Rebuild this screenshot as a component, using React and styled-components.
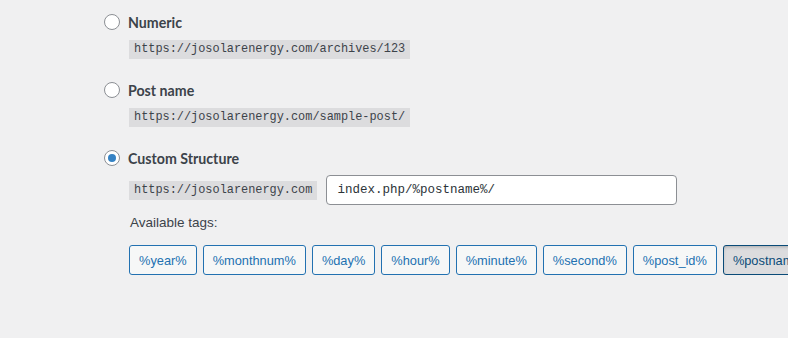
import React from 'react';
import styled, { createGlobalStyle } from "styled-components";

const Global = createGlobalStyle`
  body {
    margin: 0;
    background: #f0f0f1;
    font-family: "Liberation Sans", Arial, sans-serif;
    color: #1d2327;
  }
`;

const Page = styled.div`
  width: 788px;
  height: 338px;
  overflow: hidden;
  padding: 12px 0 0 104px;
  box-sizing: border-box;
`;

const Option = styled.div`
  display: flex;
  flex-direction: column;
  margin-bottom: 21px;
`;

const RadioRow = styled.label`
  display: flex;
  align-items: center;
  gap: 8px;
  height: 20px;
  font-family: Lato, "Liberation Sans", sans-serif;
  font-size: 14.2px;
  font-weight: 700;
  color: #3c434a;
`;

const Radio = styled.span`
  width: 16px;
  height: 16px;
  box-sizing: border-box;
  border-radius: 50%;
  border: 1px solid #8c8f94;
  background: #fff;
  display: flex;
  align-items: center;
  justify-content: center;
  &::after {
    content: "";
    display: ${p => (p.checked ? "block" : "none")};
    width: 8px;
    height: 8px;
    border-radius: 50%;
    background: #3582c4;
  }
`;

const Indent = styled.div`
  display: flex;
  flex-direction: column;
  align-items: flex-start;
  padding-left: 25px;
  margin-top: ${p => p.top || 8}px;
`;

const Code = styled.code`
  display: block;
  font-family: "Liberation Mono", monospace;
  font-size: 11.9px;
  line-height: 19px;
  padding: 0 5px;
  background: #dcdcde;
  color: #3c434a;
`;

const CustomRow = styled.div`
  display: flex;
  align-items: center;
  gap: 9px;
`;

const Input = styled.div`
  width: 351px;
  height: 30px;
  box-sizing: border-box;
  background: #fff;
  border: 1px solid #8c8f94;
  border-radius: 4px;
  padding: 0 10px;
  display: flex;
  align-items: center;
  font-family: "Liberation Mono", monospace;
  font-size: 12.5px;
  color: #2c3338;
`;

const TagsLabel = styled.p`
  margin: 8px 0 0 1px;
  font-size: 13.5px;
  line-height: 20px;
  color: #3c434a;
`;

const Tags = styled.div`
  display: flex;
  gap: 6px;
  margin-top: 12px;
  white-space: nowrap;
`;

const Tag = styled.button`
  flex: none;
  height: 30px;
  padding: 0 9px;
  border: 1px solid ${p => (p.active ? "#0a4b78" : "#2271b1")};
  border-radius: 3px;
  background: ${p => (p.active ? "#dcdcde" : "#f6f7f7")};
  color: ${p => (p.active ? "#0a4b78" : "#2271b1")};
  font-family: "Liberation Sans", Arial, sans-serif;
  font-size: 12.8px;
  box-shadow: ${p => (p.active ? "inset 0 2px 5px -3px rgba(0,0,0,0.5)" : "none")};
`;

const tags = ["%year%", "%monthnum%", "%day%", "%hour%", "%minute%", "%second%", "%post_id%", "%postname%", "%category%"];

export default function App() {
  return (
    <Page>
      <Global />
      <Option>
        <RadioRow><Radio />Numeric</RadioRow>
        <Indent><Code>https://josolarenergy.com/archives/123</Code></Indent>
      </Option>
      <Option>
        <RadioRow><Radio />Post name</RadioRow>
        <Indent><Code>https://josolarenergy.com/sample-post/</Code></Indent>
      </Option>
      <Option>
        <RadioRow><Radio checked />Custom Structure</RadioRow>
        <Indent top={7}>
          <CustomRow>
            <Code>https://josolarenergy.com</Code>
            <Input>index.php/%postname%/</Input>
          </CustomRow>
          <TagsLabel>Available tags:</TagsLabel>
          <Tags>
            {tags.map(t => (
              <Tag key={t} active={t === "%postname%"}>{t}</Tag>
            ))}
          </Tags>
        </Indent>
      </Option>
    </Page>
  );
}
